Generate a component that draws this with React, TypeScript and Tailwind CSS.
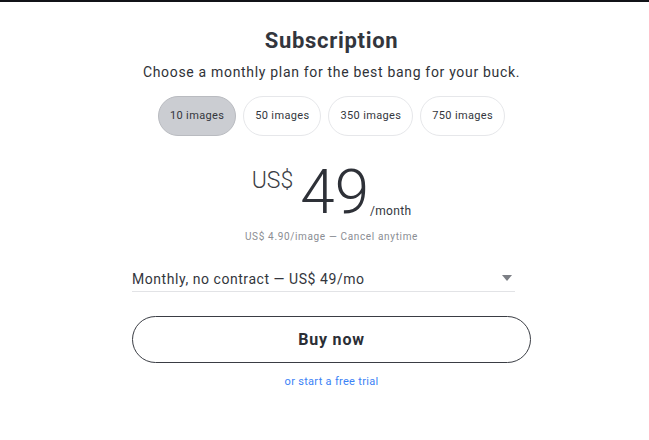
import { useState } from 'react'

const PLANS = [
  { label: '10 images', price: 49, perImage: '4.90' },
  { label: '50 images', price: 199, perImage: '3.98' },
  { label: '350 images', price: 999, perImage: '2.85' },
  { label: '750 images', price: 1799, perImage: '2.40' },
]

export default function App() {
  const [selected, setSelected] = useState(0)
  const plan = PLANS[selected]

  return (
    <div className="min-h-[440px] bg-white font-['Roboto',sans-serif] text-[#33363d]">
      <div className="h-[2px] bg-[#111318]" />

      <div className="flex justify-center pl-[14px]">
        <div className="w-[399px] flex flex-col items-center">
          <h1 className="mt-[25px] text-[22px] leading-[28px] font-bold tracking-[0.7px]">Subscription</h1>
          <p className="mt-[7px] text-[14px] leading-[20px] tracking-[0.68px] text-[#2f3238]">
            Choose a monthly plan for the best bang for your buck.
          </p>

          {/* Plan pills */}
          <div className="mt-[14px] flex gap-[7px]">
            {PLANS.map((p, i) => (
              <button
                key={p.label}
                onClick={() => setSelected(i)}
                className={`h-[40px] px-[11px] rounded-full text-[11px] tracking-[0.35px] border ${
                  i === selected
                    ? 'bg-[#cbcdd2] border-[#b9bbc0] text-[#33363d]'
                    : 'bg-white border-[#e6e7ea] text-[#33363d]'
                }`}
              >
                {p.label}
              </button>
            ))}
          </div>

          {/* Price */}
          <div className="mt-[26px] flex items-start">
            <span className="mt-[5px] text-[23px] leading-[28px] font-light text-[#3a3d44]">US$</span>
            <span className="ml-[7px] text-[62px] leading-[60px] font-light text-[#2e3138]">
              {plan.price}
            </span>
            <span className="ml-[1px] mt-[41px] text-[12px] leading-[16px] tracking-[0.3px] text-[#33363d]">/month</span>
          </div>
          <p className="mt-[8px] text-[10px] leading-[14px] text-[#8a8d93] tracking-[0.65px]">
            US$ {plan.perImage}/image — Cancel anytime
          </p>

          {/* Contract select */}
          <div className="self-start w-[383px] mt-[25px] flex items-center justify-between border-b border-[#e2e3e6] pb-[2px]">
            <span className="text-[14px] leading-[20px] tracking-[0.55px] text-[#33363d]">
              Monthly, no contract — US$ {plan.price}/mo
            </span>
            <svg width="10" height="6" viewBox="0 0 10 6" className="mr-[3px] mb-[3px]">
              <path d="M0 0h10L5 6z" fill="#7c7f85" />
            </svg>
          </div>

          <button className="mt-[24px] w-full h-[47px] rounded-full border border-[#3a3d44] text-[16px] font-bold tracking-[0.8px] text-[#2b2e35]">
            Buy now
          </button>

          <a href="#" className="mt-[12px] text-[11px] leading-[14px] tracking-[0.3px] text-[#3b82f6]">
            or start a free trial
          </a>
        </div>
      </div>
    </div>
  )
}
